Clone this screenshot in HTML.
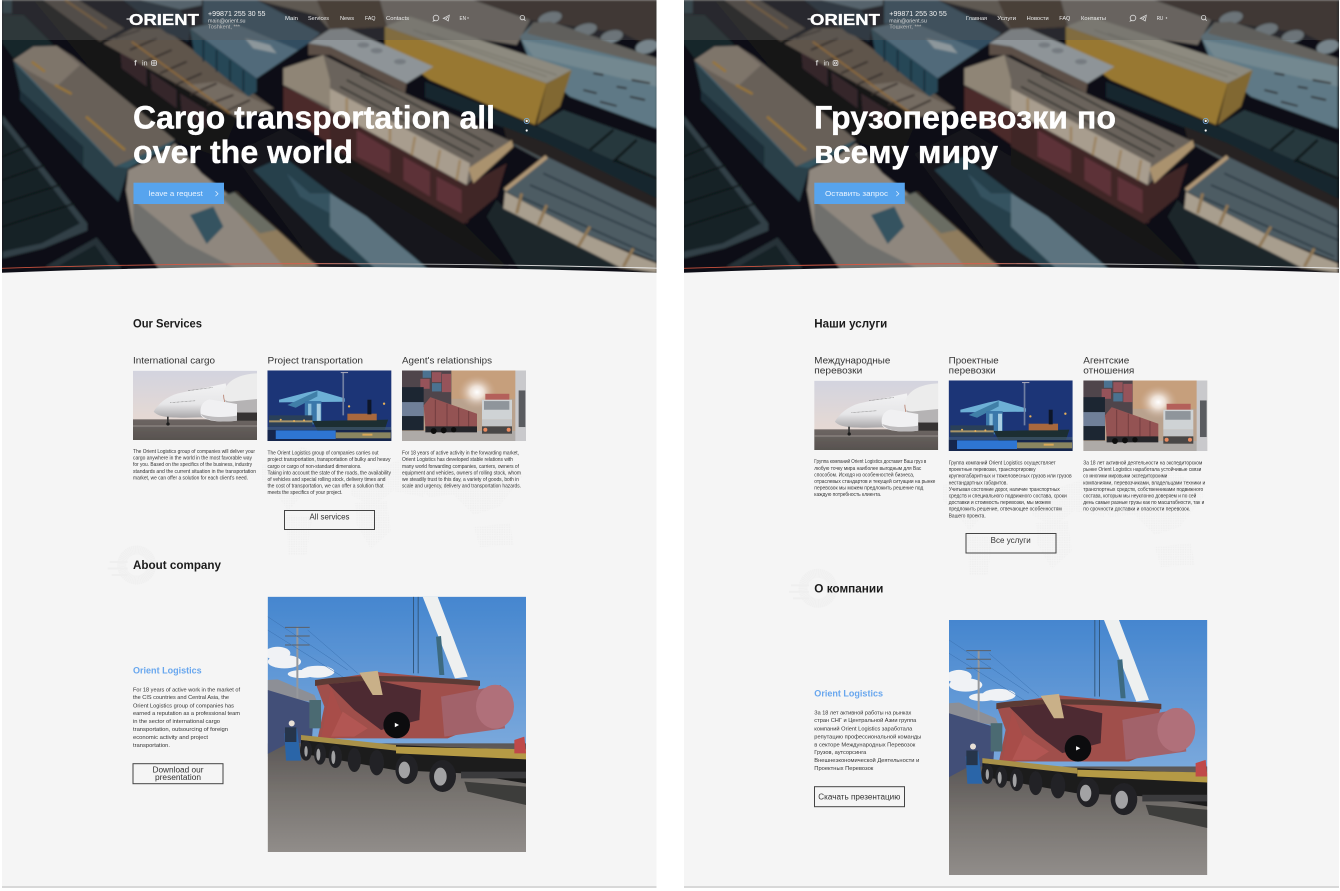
<!DOCTYPE html>
<html lang="en">
<head>
<meta charset="utf-8">
<title>Orient Logistics</title>
<style>
html,body{margin:0;padding:0;background:#fff;width:1340px;height:891px;overflow:hidden}
svg.page{display:block;filter:blur(.28px)}
text{font-family:"Liberation Sans","Noto Sans CJK SC",sans-serif}
.h1{font-size:32px;font-weight:700;fill:#fff;stroke:#fff;stroke-width:.35}
.h2{font-size:11.5px;font-weight:700;fill:#1c1c1c}
.h3{font-size:9.4px;fill:#333}
.p{font-size:5.5px;fill:#333}
.q{font-size:5.7px;fill:#333}
.b{font-size:7.8px;fill:#333}
.l{font-size:9.6px;font-weight:700;fill:#67a6ee}
.n{font-size:5.6px;fill:#eee}
.ph{font-size:7.6px;fill:#f2f2f2}
.m{font-size:5.6px;fill:#ddd}
.t{font-size:5px;fill:#bbb}
.logo{font-size:16px;font-weight:700;fill:#fff;stroke:#fff;stroke-width:.3}
.bt{font-size:7.2px;fill:#eaf4ff}
.btn{fill:none;stroke:#444;stroke-width:1}
.ic{fill:none;stroke:#ddd;stroke-width:.8}
.s{font-size:7px;fill:#e8e8e8}
</style>
</head>
<body>
<svg class="page" width="1340" height="891" viewBox="0 0 1340 891" xmlns="http://www.w3.org/2000/svg">
<defs>
<linearGradient id="lineG" x1="0" x2="1" y1="0" y2="0"><stop offset="0" stop-color="#c8503c"/><stop offset=".46" stop-color="#d8604c"/><stop offset=".6" stop-color="#aaa"/><stop offset="1" stop-color="#eee"/></linearGradient>
<linearGradient id="sky1" x1="0" x2="0" y1="0" y2="1"><stop offset="0" stop-color="#d3d4df"/><stop offset="1" stop-color="#e6d9d3"/></linearGradient>
<linearGradient id="gr1" x1="0" x2="0" y1="0" y2="1"><stop offset="0" stop-color="#6d6663"/><stop offset="1" stop-color="#57524f"/></linearGradient>
<linearGradient id="pl" x1="0" x2="0" y1="0" y2="1"><stop offset="0" stop-color="#f2f2f3"/><stop offset=".6" stop-color="#e6e6e8"/><stop offset="1" stop-color="#a8a6a8"/></linearGradient>
<linearGradient id="sky2" x1="0" x2="0" y1="0" y2="1"><stop offset="0" stop-color="#4586cf"/><stop offset="1" stop-color="#7eabdd"/></linearGradient>
<linearGradient id="gr2" x1="0" x2="0" y1="0" y2="1"><stop offset="0" stop-color="#5c5857"/><stop offset=".45" stop-color="#77736f"/><stop offset="1" stop-color="#918d8a"/></linearGradient>
<radialGradient id="glow"><stop offset="0" stop-color="#fff"/><stop offset=".35" stop-color="#f2e8e0" stop-opacity=".9"/><stop offset="1" stop-color="#c9a88e" stop-opacity="0"/></radialGradient>
<filter id="bl" x="-5%" y="-5%" width="110%" height="110%"><feGaussianBlur stdDeviation="3"/></filter>
<filter id="bl2" x="-5%" y="-5%" width="110%" height="110%"><feGaussianBlur stdDeviation="1"/></filter>
<pattern id="dots" width="2.4" height="2.4" patternUnits="userSpaceOnUse"><rect width="1.5" height="1.5" fill="#f0f0f0"/></pattern>
<clipPath id="cpL"><path d="M2,0H656.5V272.7Q300,261 2,272.7Z"/></clipPath>
<clipPath id="cpR"><path d="M684,0H1339V272.7Q981,261 684,272.7Z"/></clipPath>

<symbol id="hero" viewBox="0 0 1980 825" preserveAspectRatio="none">
<g filter="url(#bl)">
<rect width="1980" height="825" fill="#0c1013"/>
<polygon points="8,45 70,45 160,135 40,175 8,130" fill="#1c2a31"/>
<polygon points="8,0 35,0 35,40 8,40" fill="#2d4650"/>
<polygon points="8,345 262,670 262,692 130,745 8,775" fill="#3a4a50"/>
<polygon points="8,370 240,670 125,730 8,755" fill="#1a262c"/>
<g stroke="#0d1519" stroke-width="5"><line x1="8" y1="470" x2="105" y2="430"/><line x1="8" y1="540" x2="150" y2="490"/><line x1="8" y1="610" x2="195" y2="550"/><line x1="8" y1="680" x2="225" y2="610"/></g>
<polygon points="135,800 290,712 365,805" fill="#2c3a40"/>
<polygon points="175,798 285,735 330,800" fill="#1c282d"/>
<polygon points="100,0 130,0 710,355 660,472 520,422 300,240" fill="#17171b"/>
<g fill="#3f2b32"><polygon points="360,150 440,205 440,260 365,205"/><polygon points="450,215 530,270 530,325 455,270"/><polygon points="540,280 620,330 620,385 545,335"/></g>
<polygon points="130,0 235,0 372,85 300,125" fill="#5e5349"/>
<polygon points="310,130 400,85 490,85 822,325 710,352" fill="#6f6358"/>
<polygon points="560,255 650,245 822,325 710,352" fill="#8a7f72"/>
<g stroke="#3a322d" stroke-width="5"><line x1="345" y1="115" x2="420" y2="90"/><line x1="390" y1="150" x2="470" y2="115"/><line x1="435" y1="185" x2="515" y2="150"/><line x1="480" y1="220" x2="560" y2="185"/><line x1="525" y1="255" x2="605" y2="220"/><line x1="570" y1="285" x2="650" y2="250"/><line x1="620" y1="315" x2="700" y2="285"/><line x1="665" y1="340" x2="750" y2="300"/></g>
<line x1="395" y1="125" x2="690" y2="340" stroke="#a77c40" stroke-width="5"/>
<line x1="195" y1="0" x2="320" y2="85" stroke="#9a7340" stroke-width="6"/>
<polygon points="370,0 420,0 540,30 570,85 565,125 500,100" fill="#1d3340"/>
<polygon points="420,0 605,0 605,15 540,28" fill="#627e8c"/>
<polygon points="610,0 770,0 960,100 925,130 895,150 680,60 610,72" fill="#3a5a70"/>
<polygon points="770,0 990,0 990,90 950,45" fill="#75695c"/>
<polygon points="950,0 1160,0 1160,80 990,90" fill="#4c3b2d"/>
<polygon points="570,85 680,60 895,150 770,235" fill="#5f7e8e"/>
<polygon points="735,115 810,135 830,160 760,145" fill="#a6b2b6"/>
<polygon points="570,85 770,235 770,275 745,290 582,155" fill="#2d5265"/>
<g stroke="#183240" stroke-width="5"><line x1="610" y1="118" x2="610" y2="185"/><line x1="650" y1="150" x2="650" y2="215"/><line x1="690" y1="180" x2="690" y2="245"/><line x1="730" y1="210" x2="730" y2="275"/></g>
<polygon points="1140,0 1420,0 1590,60 1550,135 1160,75" fill="#857d74"/>
<polygon points="1420,0 1970,0 1970,150 1870,100 1590,60" fill="#3a2e28"/>
<g fill="#8c9ba3"><ellipse cx="1650" cy="55" rx="36" ry="18" transform="rotate(-15 1650 55)"/><ellipse cx="1755" cy="90" rx="36" ry="18" transform="rotate(-15 1755 90)"/><ellipse cx="1835" cy="110" rx="34" ry="18" transform="rotate(-15 1835 110)"/><ellipse cx="1940" cy="140" rx="34" ry="20" transform="rotate(-15 1940 140)"/></g>
<polygon points="1560,110 1600,70 1650,65 1970,175 1970,385 1710,290 1590,185" fill="#6e8e9d"/>
<polygon points="1600,68 1650,65 1970,175 1970,200 1580,100" fill="#77756d"/>
<polygon points="1565,120 1970,200 1970,260 1600,170" fill="#87a0a8"/>
<g stroke="#332c2a" stroke-width="5"><line x1="1780" y1="220" x2="1810" y2="225"/><line x1="1895" y1="240" x2="1950" y2="250"/><line x1="1750" y1="270" x2="1790" y2="280"/><line x1="1850" y1="260" x2="1880" y2="265"/><line x1="1890" y1="290" x2="1935" y2="300"/><line x1="1800" y1="305" x2="1850" y2="318"/></g>
<polygon points="1275,245 1610,380 1970,540 1970,595 1630,430 1275,292" fill="#1a2b33"/>
<polygon points="1690,295 1970,385 1970,432 1690,330" fill="#0e1215"/>
<polygon points="1610,378 1690,330 1970,432 1970,540" fill="#2d4046"/>
<g stroke="#0d1417" stroke-width="7"><line x1="1840" y1="390" x2="1770" y2="450"/><line x1="1910" y1="420" x2="1840" y2="485"/><line x1="1845" y1="480" x2="1970" y2="535"/></g>
<polygon points="1530,430 1620,445 1970,610 1970,628 1640,490" fill="#555f62"/>
<polygon points="1510,380 1520,420 1640,480 1980,630 1980,600 1640,430" fill="#2a2723"/>
<polygon points="1155,80 1230,50 1715,210 1640,250" fill="#a6a294"/>
<polygon points="1155,80 1640,250 1605,375 1290,240 1155,140" fill="#b38d39"/>
<polygon points="1640,250 1715,210 1680,320 1610,375" fill="#987a3a"/>
<g stroke="#8b887c" stroke-width="3"><line x1="1280" y1="100" x2="1670" y2="225"/><line x1="1240" y1="90" x2="1640" y2="230"/></g>
<polygon points="925,130 990,88 1040,85 1300,200 1220,250 990,140" fill="#a7aeb2"/>
<polygon points="925,130 990,140 1220,250 1215,280 990,165 925,165" fill="#6a5d50"/>
<g fill="#8a9095"><ellipse cx="1090" cy="135" rx="18" ry="8"/><ellipse cx="1130" cy="152" rx="18" ry="8"/><ellipse cx="1200" cy="185" rx="18" ry="8"/></g>
<polygon points="700,462 850,385 990,470 1510,800 1300,815 950,800" fill="#1a1c1d"/>
<polygon points="760,510 850,470 1230,760 1290,812 1100,812 1000,745" fill="#2e4a56"/>
<polygon points="990,580 1100,650 1280,805 1130,810 990,680" fill="#6a8794"/>
<polygon points="860,520 930,580 990,580 990,640 900,590" fill="#3f6070"/>
<polygon points="40,180 345,500 385,505 355,605 250,500 60,270" fill="#2f4954"/>
<polygon points="40,180 100,140 170,138 220,170 525,420 345,500" fill="#7a7066"/>
<polygon points="40,180 100,140 170,138 240,195 170,260 90,215" fill="#94897d"/>
<polygon points="60,200 340,490 345,500 40,185" fill="#4d7080"/>
<polygon points="345,500 525,420 505,440 385,505" fill="#3f6470"/>
<polygon points="60,270 250,440 250,500 60,300" fill="#223640"/>
<g stroke="#b58b3c" stroke-width="7" fill="none"><line x1="95" y1="185" x2="135" y2="215"/><line x1="165" y1="255" x2="215" y2="282"/><line x1="258" y1="350" x2="375" y2="450"/></g>
<polygon points="385,510 470,470 525,430 605,520 955,800 700,812 480,812 400,690 378,570" fill="#a89f93"/>
<polygon points="400,690 480,812 720,812 560,730 400,600" fill="#84847f"/>
<polygon points="670,590 710,575 945,795 850,798" fill="#a8916c"/>
<polygon points="570,645 640,620 670,680 620,732" fill="#3e6170"/>
<polygon points="660,590 705,575 830,690 780,700" fill="#54707a" opacity=".5"/>
<line x1="705" y1="575" x2="960" y2="800" stroke="#2b2522" stroke-width="5"/>
<polygon points="850,260 1000,320 1000,440 1400,670 1520,490 1490,590 1390,672 1000,440 850,335" fill="#57302f"/>
<polygon points="990,330 1400,555 1520,490 1490,590 1390,670 990,440" fill="#4b2a2c"/>
<g fill="#6d3a3f"><polygon points="1070,390 1170,450 1170,520 1070,470"/><polygon points="1210,470 1290,515 1290,590 1210,540"/><polygon points="1310,530 1385,570 1385,640 1310,600"/></g>
<polygon points="990,440 1390,670 1515,795 1490,800 990,495" fill="#1b1a1b"/>
<polygon points="850,205 970,165 1060,210 1535,425 1400,555 990,330 850,255" fill="#7c756a"/>
<polygon points="850,205 970,165 990,240 990,320 850,255" fill="#a89c8a"/>
<polygon points="990,265 1410,490 1400,555 990,330" fill="#c6b9a6"/>
<g stroke="#3e3c38" stroke-width="5"><line x1="1040" y1="240" x2="1440" y2="450"/><line x1="1080" y1="225" x2="1480" y2="440"/><line x1="1020" y1="260" x2="1420" y2="470"/></g>
<g stroke="#b89a6e" stroke-width="7"><line x1="1040" y1="295" x2="1040" y2="350"/><line x1="1170" y1="380" x2="1170" y2="425"/><line x1="1245" y1="410" x2="1235" y2="465"/><line x1="1320" y1="450" x2="1310" y2="505"/><line x1="1380" y1="480" x2="1370" y2="540"/></g>
<polygon points="1405,505 1535,420 1540,440 1420,550" fill="#c9ac80"/>
<polygon points="1460,650 1490,600 1515,625 1860,800 1560,812" fill="#1d2b30"/>
<polygon points="1510,570 1640,470 1970,630 1970,785 1750,700" fill="#5a6c74"/>
<polygon points="1515,575 1750,700 1890,760 1970,790 1970,818 1860,802 1510,625" fill="#c6baa6"/>
<g stroke="#33444c" stroke-width="5"><line x1="1590" y1="555" x2="1970" y2="720"/><line x1="1630" y1="520" x2="1970" y2="680"/><line x1="1560" y1="590" x2="1960" y2="770"/></g>
<line x1="1515" y1="570" x2="1640" y2="470" stroke="#cdb088" stroke-width="12"/>
<g stroke="#a88c62" stroke-width="9"><line x1="1640" y1="615" x2="1615" y2="675"/><line x1="1770" y1="680" x2="1735" y2="740"/><line x1="1900" y1="745" x2="1870" y2="800"/><line x1="1565" y1="580" x2="1550" y2="640"/></g>
<rect width="1980" height="825" fill="#0a0e12" opacity=".16"/>
</g>
</symbol>

<symbol id="plane" viewBox="0 0 372 208" preserveAspectRatio="none">
<g filter="url(#bl2)">
<rect width="372" height="150" fill="url(#sky1)"/>
<rect y="146" width="372" height="62" fill="url(#gr1)"/>
<rect y="164" width="372" height="4" fill="#8b8581"/>
<path d="M62,123C75,100 100,78 135,68L278,38L300,142L200,140C130,142 80,144 62,123Z" fill="url(#pl)"/>
<rect x="310" y="125" width="62" height="25" fill="#343232"/>
<path d="M372,8C320,10 272,30 272,75C272,105 290,120 320,125L372,125Z" fill="#ececec"/>
<path d="M372,85L300,92Q285,94 276,88C282,108 295,122 320,125L372,125Z" fill="#b5b3b4"/>
<path d="M272,72C272,100 285,118 310,124" fill="none" stroke="#a9654f" stroke-width="2"/>
<path d="M230,86C208,90 198,112 204,134C215,152 270,156 312,150L312,100Z" fill="#f0f0f2"/>
<path d="M204,130C215,152 270,156 312,150L312,135C270,142 230,140 204,130Z" fill="#bdbbbd"/>
<path d="M165,60L240,50" stroke="#777" stroke-width="2" stroke-dasharray="2 2"/>
<path d="M112,96L188,90" stroke="#777" stroke-width="2" stroke-dasharray="2 2"/>
<rect x="102" y="138" width="5" height="20" fill="#333"/>
<circle cx="105" cy="160" r="5" fill="#1c1c1c"/>
</g>
</symbol>

<symbol id="port" viewBox="0 0 372 212" preserveAspectRatio="none">
<g filter="url(#bl2)">
<rect width="372" height="212" fill="#1e3677"/>
<rect y="178" width="372" height="34" fill="#14264e"/>
<rect x="25" y="180" width="180" height="26" fill="#2f74d2"/>
<rect x="205" y="186" width="165" height="18" fill="#8a8560"/>
<rect x="285" y="190" width="30" height="6" fill="#d8a858"/>
<path d="M35,88L120,66L150,60L232,84L232,94L35,96Z" fill="#6db0d6"/>
<path d="M60,104L150,62L150,78L85,112Z" fill="#3f7fa8"/>
<rect x="112" y="92" width="50" height="70" fill="#3a78aa"/>
<rect x="122" y="100" width="10" height="55" fill="#8cc0dc"/><rect x="148" y="100" width="12" height="60" fill="#a8cfe4"/>
<rect x="225" y="5" width="5" height="130" fill="#6f7fa2"/>
<rect x="220" y="5" width="22" height="3" fill="#aab"/>
<rect x="5" y="135" width="130" height="34" fill="#2c4058"/>
<rect x="5" y="150" width="130" height="6" fill="#a79468"/>
<g fill="#e6b05a"><circle cx="245" cy="108" r="3.5"/><circle cx="350" cy="100" r="3.5"/><circle cx="40" cy="148" r="3"/><circle cx="80" cy="152" r="3"/><circle cx="110" cy="150" r="3"/></g>
<path d="M135,152L362,148L352,178L150,180Z" fill="#1f2e30"/>
<rect x="240" y="130" width="88" height="20" fill="#a9683e"/>
<rect x="300" y="88" width="12" height="44" fill="#10182c"/>
<rect x="0" y="170" width="372" height="9" fill="#44607a" opacity=".6"/>
</g>
</symbol>

<symbol id="truck" viewBox="0 0 372 212" preserveAspectRatio="none">
<g filter="url(#bl2)">
<rect width="372" height="212" fill="#b9a28e"/>
<rect x="140" width="210" height="85" fill="#c69f7c"/>
<ellipse cx="225" cy="65" rx="58" ry="52" fill="url(#glow)"/>
<rect x="0" y="0" width="148" height="110" fill="#4f454c"/>
<g fill="#96525a"><rect x="90" y="5" width="28" height="30"/><rect x="120" y="10" width="27" height="55"/><rect x="55" y="25" width="28" height="30"/></g>
<g fill="#4b7290"><rect x="62" y="0" width="25" height="22"/><rect x="90" y="38" width="28" height="25"/></g>
<rect x="0" y="50" width="65" height="130" fill="#1d2731"/>
<rect x="0" y="95" width="65" height="42" fill="#6f8099"/>
<rect y="182" width="372" height="30" fill="#aeaaa7"/>
<polygon points="65,105 85,80 225,130 225,168 70,172" fill="#945352"/>
<g stroke="#733d3f" stroke-width="3"><line x1="100" y1="88" x2="100" y2="170"/><line x1="135" y1="100" x2="135" y2="170"/><line x1="170" y1="112" x2="170" y2="168"/><line x1="200" y1="122" x2="200" y2="168"/></g>
<rect x="70" y="168" width="155" height="18" fill="#26262a"/>
<g fill="#111"><circle cx="95" cy="182" r="9"/><circle cx="125" cy="180" r="9"/><circle cx="155" cy="178" r="8"/></g>
<rect x="250" y="70" width="72" height="18" fill="#b4605a"/>
<rect x="240" y="88" width="90" height="60" fill="#cfd3d5"/>
<rect x="246" y="92" width="76" height="26" fill="#8f959b"/>
<rect x="240" y="148" width="90" height="20" fill="#c3c5c7"/>
<rect x="240" y="168" width="90" height="22" fill="#4a4646"/>
<circle cx="250" cy="178" r="6" fill="#ec8a5e"/><circle cx="320" cy="178" r="6" fill="#ec8a5e"/>
<rect x="340" width="32" height="212" fill="#c9c9cc"/>
<rect x="350" y="60" width="20" height="110" fill="#5a5b60"/>
</g>
</symbol>

<symbol id="photo" viewBox="0 0 775 766" preserveAspectRatio="none">
<g filter="url(#bl2)">
<rect width="775" height="480" fill="url(#sky2)"/>
<rect y="440" width="775" height="326" fill="url(#gr2)"/>
<g fill="#f0f2f5"><ellipse cx="30" cy="170" rx="38" ry="20"/><ellipse cx="50" cy="195" rx="50" ry="20"/><ellipse cx="150" cy="225" rx="50" ry="18"/><ellipse cx="100" cy="232" rx="40" ry="12"/></g>
<polygon points="0,250 30,248 140,295 150,320 0,290" fill="#8d8f96"/>
<polygon points="0,280 140,322 132,440 60,440 0,472" fill="#434f78"/>
<rect x="86" y="90" width="6" height="215" fill="#96989c"/>
<g stroke="#5d6066" stroke-width="3"><line x1="52" y1="92" x2="126" y2="92"/><line x1="52" y1="118" x2="126" y2="118"/><line x1="52" y1="145" x2="126" y2="145"/></g>
<g stroke="#3a71b2" stroke-width="1.5"><line x1="0" y1="60" x2="240" y2="220"/><line x1="0" y1="100" x2="240" y2="250"/><line x1="120" y1="100" x2="270" y2="230"/></g>
<rect x="436" y="0" width="3" height="230" fill="#33597f"/><rect x="450" y="0" width="3" height="230" fill="#33597f"/>
<polygon points="465,0 510,0 600,240 562,245" fill="#eef0f0"/>
<polygon points="505,120 520,118 530,235 515,235" fill="#3c6a80"/>
<polygon points="142,255 327,226 637,255 600,400 540,425 150,425 170,330" fill="#a04f4b"/>
<path d="M142,250Q300,225 637,252L637,268Q300,240 142,268Z" fill="#5b3a36"/>
<polygon points="182,262 320,250 460,280 455,370 340,400 260,340" fill="#4d2c30"/>
<polygon points="190,272 250,420 160,425" fill="#a84e4a"/>
<polygon points="225,345 300,395 260,420 190,420" fill="#b25752"/>
<polygon points="275,228 330,222 345,295 315,295" fill="#c9b088"/>
<polygon points="520,300 700,265 712,395 530,420" fill="#a2626a"/>
<ellipse cx="682" cy="330" rx="57" ry="66" fill="#b0707a"/>
<polygon points="100,425 380,445 775,460 775,560 590,530 380,520 100,470" fill="#1d1c1e"/>
<polygon points="100,415 385,445 385,462 100,430" fill="#a9914a"/>
<polygon points="385,450 775,458 775,488 385,470" fill="#b59a44"/>
<rect x="580" y="525" width="195" height="20" fill="#3a3a3c"/>
<polygon points="590,555 775,570 775,625 600,585" fill="#3e3c3b"/>
<polygon points="740,430 770,420 775,470 740,470" fill="#c04848"/>
<g fill="#232325">
<ellipse cx="115" cy="462" rx="18" ry="30"/><ellipse cx="157" cy="472" rx="18" ry="32"/><ellipse cx="203" cy="480" rx="20" ry="34"/><ellipse cx="260" cy="490" rx="20" ry="36"/><ellipse cx="327" cy="498" rx="22" ry="38"/><ellipse cx="417" cy="518" rx="34" ry="44"/><ellipse cx="525" cy="538" rx="40" ry="48"/>
</g>
<g fill="#a2a2a4"><ellipse cx="410" cy="520" rx="17" ry="25"/><ellipse cx="518" cy="540" rx="19" ry="27"/><ellipse cx="197" cy="482" rx="6" ry="20"/><ellipse cx="152" cy="474" rx="6" ry="18"/><ellipse cx="115" cy="464" rx="5" ry="16"/></g>
<polygon points="50,410 88,395 100,492 55,492" fill="#2c65a8"/>
<rect x="52" y="392" width="34" height="44" fill="#26354c"/>
<circle cx="72" cy="380" r="9" fill="#e8e0d6"/>
<rect x="125" y="310" width="35" height="85" fill="#4b6a72"/>
</g>
</symbol>

<symbol id="deco" viewBox="0 0 80 50" preserveAspectRatio="none">
<circle cx="42" cy="25" r="15" fill="none" stroke="#f0f0f0" stroke-width="9" stroke-dasharray="1.2 .4"/>
<g fill="#efefef"><rect x="15" y="21" width="18" height="2"/><rect x="13" y="27.5" width="20" height="2"/><rect x="17" y="34" width="16" height="2"/></g>
</symbol>

<symbol id="map" viewBox="0 0 260 110" preserveAspectRatio="none">
<g fill="url(#dots)">
<path d="M0,20L40,2L62,10L55,36L38,52L26,66L12,46L0,36Z"/>
<path d="M24,70L50,72L44,110L26,110Z"/>
<path d="M92,30L140,14L170,30L160,52L130,46L110,62L88,50Z"/>
<path d="M92,58L124,56L128,86L108,104L94,80Z"/>
<path d="M150,25L230,5L260,30L235,62L210,70L190,50L165,52Z"/>
<path d="M210,82L246,78L250,100L216,102Z"/>
</g>
</symbol>
</defs>

<rect width="1340" height="891" fill="#fff"/>

<rect x="2" y="0" width="654.5" height="888" fill="#d8d8d8"/>
<rect x="2" y="0" width="654.5" height="886" fill="#f5f5f5"/>
<rect x="684" y="0" width="655" height="888" fill="#d8d8d8"/>
<rect x="684" y="0" width="655" height="886" fill="#f5f5f5"/>

<!-- ===== LEFT ===== -->
<g clip-path="url(#cpL)">
<use href="#hero" x="0" y="0" width="660" height="275"/>
<rect x="2" y="0" width="655" height="40" fill="#5a5a5a" fill-opacity=".36"/>
</g>
<path d="M2,268.3Q300,259 656.5,268.2" fill="none" stroke="url(#lineG)" stroke-width=".9"/>

<path d="M126.5,19H130.5" stroke="#fff" stroke-width="1"/>
<text class="logo" x="129" y="25" textLength="70" lengthAdjust="spacingAndGlyphs">ORIENT</text>
<text class="ph" x="208" y="16" textLength="57.5" lengthAdjust="spacingAndGlyphs">+99871 255 30 55</text>
<text class="m" x="208" y="22.6" textLength="37.5" lengthAdjust="spacingAndGlyphs">main@orient.su</text>
<text class="t" x="208" y="28.6" textLength="32" lengthAdjust="spacingAndGlyphs">Toshkent, ***</text>
<text class="n" x="285" y="20" textLength="13" lengthAdjust="spacingAndGlyphs">Main</text>
<text class="n" x="308" y="20" textLength="21" lengthAdjust="spacingAndGlyphs">Services</text>
<text class="n" x="340" y="20" textLength="14" lengthAdjust="spacingAndGlyphs">News</text>
<text class="n" x="365" y="20" textLength="10.5" lengthAdjust="spacingAndGlyphs">FAQ</text>
<text class="n" x="386" y="20" textLength="23" lengthAdjust="spacingAndGlyphs">Contacts</text>
<circle class="ic" cx="436" cy="18" r="2.8"/><path class="ic" d="M434.1,20L433.3,21L434.8,20.6"/>
<path class="ic" d="M443.3,18.3L449.3,15.2L448.2,21L445.7,19.3ZM445.7,19.3L447.7,17"/>
<text class="n" x="459.5" y="20" textLength="6.5" lengthAdjust="spacingAndGlyphs">EN</text>
<circle cx="468" cy="18" r=".7" fill="#ddd"/>
<circle class="ic" cx="522.3" cy="17.6" r="2.2"/><path class="ic" d="M523.9,19.2L525.4,20.7"/>
<text class="s" x="134" y="65.5" textLength="2.8" lengthAdjust="spacingAndGlyphs">f</text>
<text class="s" x="142" y="65.5" textLength="5.5" lengthAdjust="spacingAndGlyphs">in</text>
<rect class="ic" x="151.6" y="60.6" width="4.8" height="4.8" rx="1.1"/><circle class="ic" cx="154" cy="63" r="1.1"/>

<text class="h1" x="133" y="128.5" textLength="362" lengthAdjust="spacingAndGlyphs">Cargo transportation all</text>
<text class="h1" x="133" y="163" textLength="220" lengthAdjust="spacingAndGlyphs">over the world</text>
<circle cx="526.7" cy="121" r="2.6" fill="none" stroke="#7ab2e8" stroke-width=".8"/><circle cx="526.7" cy="121" r="1.1" fill="#fff"/>
<circle cx="526.7" cy="130.5" r="1.1" fill="#fff"/>
<rect x="133.5" y="182.7" width="90.5" height="21.3" fill="#57a4ee"/>
<text class="bt" x="148.8" y="196" textLength="54" lengthAdjust="spacingAndGlyphs">leave a request</text>
<path d="M215.5,191.3L218,193.7L215.5,196.1" fill="none" stroke="#eaf4ff" stroke-width=".7"/>

<use href="#map" x="262" y="445" width="262" height="110"/>

<text class="h2" x="133" y="327.5" textLength="69" lengthAdjust="spacingAndGlyphs">Our Services</text>
<text class="h3" x="133" y="363.4" textLength="82" lengthAdjust="spacingAndGlyphs">International cargo</text>
<text class="h3" x="267.5" y="363.4" textLength="95.5" lengthAdjust="spacingAndGlyphs">Project transportation</text>
<text class="h3" x="402" y="363.4" textLength="90" lengthAdjust="spacingAndGlyphs">Agent's relationships</text>
<use href="#plane" x="133" y="370.7" width="124" height="69.3"/>
<use href="#port" x="267.4" y="370.4" width="124" height="70.6"/>
<use href="#truck" x="402" y="370.5" width="124" height="70.5"/>

<text class="p" x="133" y="452.9" textLength="122" lengthAdjust="spacingAndGlyphs">The Orient Logistics group of companies will deliver your</text>
<text class="p" x="133" y="459.6" textLength="119" lengthAdjust="spacingAndGlyphs">cargo anywhere in the world in the most favorable way</text>
<text class="p" x="133" y="466.2" textLength="119" lengthAdjust="spacingAndGlyphs">for you. Based on the specifics of the business, industry</text>
<text class="p" x="133" y="472.9" textLength="123" lengthAdjust="spacingAndGlyphs">standards and the current situation in the transportation</text>
<text class="p" x="133" y="479.6" textLength="115" lengthAdjust="spacingAndGlyphs">market, we can offer a solution for each client's need.</text>

<text class="p" x="267.5" y="454.6" textLength="111" lengthAdjust="spacingAndGlyphs">The Orient Logistics group of companies carries out</text>
<text class="p" x="267.5" y="461.2" textLength="123" lengthAdjust="spacingAndGlyphs">project transportation, transportation of bulky and heavy</text>
<text class="p" x="267.5" y="467.9" textLength="94" lengthAdjust="spacingAndGlyphs">cargo or cargo of non-standard dimensions.</text>
<text class="p" x="267.5" y="474.6" textLength="123.5" lengthAdjust="spacingAndGlyphs">Taking into account the state of the roads, the availability</text>
<text class="p" x="267.5" y="481.2" textLength="118" lengthAdjust="spacingAndGlyphs">of vehicles and special rolling stock, delivery times and</text>
<text class="p" x="267.5" y="487.6" textLength="116" lengthAdjust="spacingAndGlyphs">the cost of transportation, we can offer a solution that</text>
<text class="p" x="267.5" y="494.2" textLength="75" lengthAdjust="spacingAndGlyphs">meets the specifics of your project.</text>

<text class="p" x="402" y="454.6" textLength="117" lengthAdjust="spacingAndGlyphs">For 18 years of active activity in the forwarding market,</text>
<text class="p" x="402" y="461.2" textLength="111" lengthAdjust="spacingAndGlyphs">Orient Logistics has developed stable relations with</text>
<text class="p" x="402" y="467.9" textLength="117" lengthAdjust="spacingAndGlyphs">many world forwarding companies, carriers, owners of</text>
<text class="p" x="402" y="474.6" textLength="119" lengthAdjust="spacingAndGlyphs">equipment and vehicles, owners of rolling stock, whom</text>
<text class="p" x="402" y="481.2" textLength="117" lengthAdjust="spacingAndGlyphs">we steadily trust to this day, a variety of goods, both in</text>
<text class="p" x="402" y="487.6" textLength="119" lengthAdjust="spacingAndGlyphs">scale and urgency, delivery and transportation hazards.</text>

<rect class="btn" x="284.5" y="510.5" width="90" height="19"/>
<text class="b" x="309.5" y="519.7" textLength="40" lengthAdjust="spacingAndGlyphs">All services</text>

<use href="#deco" x="94.7" y="540" width="80" height="50"/>
<text class="h2" x="133" y="569" textLength="88" lengthAdjust="spacingAndGlyphs">About company</text>
<text class="l" x="133" y="673.4" textLength="68.7" lengthAdjust="spacingAndGlyphs">Orient Logistics</text>
<text class="q" x="133" y="691.5" textLength="107" lengthAdjust="spacingAndGlyphs">For 18 years of active work in the market of</text>
<text class="q" x="133" y="699.2" textLength="96" lengthAdjust="spacingAndGlyphs">the CIS countries and Central Asia, the</text>
<text class="q" x="133" y="707.5" textLength="101" lengthAdjust="spacingAndGlyphs">Orient Logistics group of companies has</text>
<text class="q" x="133" y="715.2" textLength="107" lengthAdjust="spacingAndGlyphs">earned a reputation as a professional team</text>
<text class="q" x="133" y="723.2" textLength="87" lengthAdjust="spacingAndGlyphs">in the sector of international cargo</text>
<text class="q" x="133" y="731.2" textLength="95" lengthAdjust="spacingAndGlyphs">transportation, outsourcing of foreign</text>
<text class="q" x="133" y="739.2" textLength="75" lengthAdjust="spacingAndGlyphs">economic activity and project</text>
<text class="q" x="133" y="747.2" textLength="37" lengthAdjust="spacingAndGlyphs">transportation.</text>
<rect class="btn" x="133" y="763.7" width="90" height="20"/>
<text class="b" x="152.5" y="772.7" textLength="51" lengthAdjust="spacingAndGlyphs">Download our</text>
<text class="b" x="155" y="780" textLength="46" lengthAdjust="spacingAndGlyphs">presentation</text>
<use href="#photo" x="267.7" y="596.7" width="258.3" height="255.3"/>
<circle cx="396.7" cy="725" r="13.3" fill="#0c0c0e"/>
<path d="M394.8,722.8L399,725L394.8,727.2Z" fill="#fff"/>

<!-- ===== RIGHT ===== -->
<g clip-path="url(#cpR)">
<use href="#hero" x="681" y="0" width="660" height="275"/>
<rect x="684" y="0" width="655" height="40" fill="#5a5a5a" fill-opacity=".36"/>
</g>
<path d="M684,268.3Q981,259 1339,268.2" fill="none" stroke="url(#lineG)" stroke-width=".9"/>

<path d="M807.5,19H811.5" stroke="#fff" stroke-width="1"/>
<text class="logo" x="810" y="25" textLength="70" lengthAdjust="spacingAndGlyphs">ORIENT</text>
<text class="ph" x="889.3" y="16" textLength="57.5" lengthAdjust="spacingAndGlyphs">+99871 255 30 55</text>
<text class="m" x="889.3" y="22.6" textLength="37.5" lengthAdjust="spacingAndGlyphs">main@orient.su</text>
<text class="t" x="889.3" y="28.6" textLength="32" lengthAdjust="spacingAndGlyphs">Тошкент, ***</text>
<text class="n" x="966" y="20" textLength="21" lengthAdjust="spacingAndGlyphs">Главная</text>
<text class="n" x="997.3" y="20" textLength="18.7" lengthAdjust="spacingAndGlyphs">Услуги</text>
<text class="n" x="1026.7" y="20" textLength="22" lengthAdjust="spacingAndGlyphs">Новости</text>
<text class="n" x="1059.3" y="20" textLength="11" lengthAdjust="spacingAndGlyphs">FAQ</text>
<text class="n" x="1081" y="20" textLength="25" lengthAdjust="spacingAndGlyphs">Контакты</text>
<circle class="ic" cx="1133" cy="18" r="2.8"/><path class="ic" d="M1131.1,20L1130.3,21L1131.8,20.6"/>
<path class="ic" d="M1140.3,18.3L1146.3,15.2L1145.2,21L1142.7,19.3ZM1142.7,19.3L1144.7,17"/>
<text class="n" x="1156.7" y="20" textLength="6.5" lengthAdjust="spacingAndGlyphs">RU</text>
<circle cx="1166.5" cy="18" r=".7" fill="#ddd"/>
<circle class="ic" cx="1203.6" cy="17.6" r="2.2"/><path class="ic" d="M1205.2,19.2L1206.7,20.7"/>
<text class="s" x="815.5" y="65.5" textLength="2.8" lengthAdjust="spacingAndGlyphs">f</text>
<text class="s" x="823.5" y="65.5" textLength="5.5" lengthAdjust="spacingAndGlyphs">in</text>
<rect class="ic" x="833.1" y="60.6" width="4.8" height="4.8" rx="1.1"/><circle class="ic" cx="835.5" cy="63" r="1.1"/>

<text class="h1" x="814" y="128.5" textLength="302" lengthAdjust="spacingAndGlyphs">Грузоперевозки по</text>
<text class="h1" x="814" y="163" textLength="184" lengthAdjust="spacingAndGlyphs">всему миру</text>
<circle cx="1205.7" cy="121" r="2.6" fill="none" stroke="#7ab2e8" stroke-width=".8"/><circle cx="1205.7" cy="121" r="1.1" fill="#fff"/>
<circle cx="1205.7" cy="130.5" r="1.1" fill="#fff"/>
<rect x="814.3" y="182.7" width="90.5" height="21.3" fill="#57a4ee"/>
<text class="bt" x="825" y="196" textLength="63" lengthAdjust="spacingAndGlyphs">Оставить запрос</text>
<path d="M896.3,191.3L898.8,193.7L896.3,196.1" fill="none" stroke="#eaf4ff" stroke-width=".7"/>

<use href="#map" x="943" y="465" width="262" height="110"/>

<text class="h2" x="814.3" y="327.5" textLength="73" lengthAdjust="spacingAndGlyphs">Наши услуги</text>
<text class="h3" x="814.3" y="363.4" textLength="76" lengthAdjust="spacingAndGlyphs">Международные</text>
<text class="h3" x="814.3" y="373.7" textLength="48" lengthAdjust="spacingAndGlyphs">перевозки</text>
<text class="h3" x="948.7" y="363.4" textLength="50" lengthAdjust="spacingAndGlyphs">Проектные</text>
<text class="h3" x="948.7" y="373.7" textLength="47" lengthAdjust="spacingAndGlyphs">перевозки</text>
<text class="h3" x="1083.3" y="363.4" textLength="46" lengthAdjust="spacingAndGlyphs">Агентские</text>
<text class="h3" x="1083.3" y="373.7" textLength="51" lengthAdjust="spacingAndGlyphs">отношения</text>
<use href="#plane" x="814.2" y="380.7" width="124" height="69.3"/>
<use href="#port" x="948.7" y="380.4" width="124" height="70.6"/>
<use href="#truck" x="1083.3" y="380.5" width="124" height="70.5"/>

<text class="p" x="814.3" y="463" textLength="112" lengthAdjust="spacingAndGlyphs">Группа компаний Orient Logistics доставит Ваш груз в</text>
<text class="p" x="814.3" y="470" textLength="107" lengthAdjust="spacingAndGlyphs">любую точку мира наиболее выгодным для Вас</text>
<text class="p" x="814.3" y="476.4" textLength="100" lengthAdjust="spacingAndGlyphs">способом. Исходя из особенностей бизнеса,</text>
<text class="p" x="814.3" y="483" textLength="121" lengthAdjust="spacingAndGlyphs">отраслевых стандартов и текущей ситуации на рынке</text>
<text class="p" x="814.3" y="489.7" textLength="109" lengthAdjust="spacingAndGlyphs">перевозок мы можем предложить решение под</text>
<text class="p" x="814.3" y="496" textLength="67" lengthAdjust="spacingAndGlyphs">каждую потребность клиента.</text>

<text class="p" x="948.7" y="464.4" textLength="107" lengthAdjust="spacingAndGlyphs">Группа компаний Orient Logistics осуществляет</text>
<text class="p" x="948.7" y="471" textLength="87" lengthAdjust="spacingAndGlyphs">проектные перевозки, транспортировку</text>
<text class="p" x="948.7" y="477.7" textLength="123" lengthAdjust="spacingAndGlyphs">крупногабаритных и тяжеловесных грузов или грузов</text>
<text class="p" x="948.7" y="484.4" textLength="59" lengthAdjust="spacingAndGlyphs">нестандартных габаритов.</text>
<text class="p" x="948.7" y="491" textLength="111" lengthAdjust="spacingAndGlyphs">Учитывая состояние дорог, наличие транспортных</text>
<text class="p" x="948.7" y="497.4" textLength="118" lengthAdjust="spacingAndGlyphs">средств и специального подвижного состава, сроки</text>
<text class="p" x="948.7" y="504" textLength="102" lengthAdjust="spacingAndGlyphs">доставки и стоимость перевозки, мы можем</text>
<text class="p" x="948.7" y="510.7" textLength="113" lengthAdjust="spacingAndGlyphs">предложить решение, отвечающее особенностям</text>
<text class="p" x="948.7" y="517.4" textLength="37" lengthAdjust="spacingAndGlyphs">Вашего проекта.</text>

<text class="p" x="1083.3" y="464.4" textLength="119" lengthAdjust="spacingAndGlyphs">За 18 лет активной деятельности на экспедиторском</text>
<text class="p" x="1083.3" y="471" textLength="118" lengthAdjust="spacingAndGlyphs">рынке Orient Logistics наработала устойчивые связи</text>
<text class="p" x="1083.3" y="477.7" textLength="84" lengthAdjust="spacingAndGlyphs">со многими мировыми экспедиторскими</text>
<text class="p" x="1083.3" y="484.4" textLength="122" lengthAdjust="spacingAndGlyphs">компаниями, перевозчиками, владельцами техники и</text>
<text class="p" x="1083.3" y="491" textLength="120" lengthAdjust="spacingAndGlyphs">транспортных средств, собственниками подвижного</text>
<text class="p" x="1083.3" y="497.4" textLength="113" lengthAdjust="spacingAndGlyphs">состава, которым мы неуклонно доверяем и по сей</text>
<text class="p" x="1083.3" y="504" textLength="121" lengthAdjust="spacingAndGlyphs">день самые разные грузы как по масштабности, так и</text>
<text class="p" x="1083.3" y="510.7" textLength="107" lengthAdjust="spacingAndGlyphs">по срочности доставки и опасности перевозок.</text>

<rect class="btn" x="966" y="533.5" width="90" height="19.5"/>
<text class="b" x="990.7" y="543" textLength="40" lengthAdjust="spacingAndGlyphs">Все услуги</text>

<use href="#deco" x="776" y="563.3" width="80" height="50"/>
<text class="h2" x="814.3" y="592.3" textLength="69" lengthAdjust="spacingAndGlyphs">О компании</text>
<text class="l" x="814.3" y="696.4" textLength="68.7" lengthAdjust="spacingAndGlyphs">Orient Logistics</text>
<text class="q" x="814.3" y="714.5" textLength="97" lengthAdjust="spacingAndGlyphs">За 18 лет активной работы на рынках</text>
<text class="q" x="814.3" y="722.2" textLength="102" lengthAdjust="spacingAndGlyphs">стран СНГ и Центральной Азии группа</text>
<text class="q" x="814.3" y="730.5" textLength="98" lengthAdjust="spacingAndGlyphs">компаний Orient Logistics заработала</text>
<text class="q" x="814.3" y="738.5" textLength="107" lengthAdjust="spacingAndGlyphs">репутацию профессиональной команды</text>
<text class="q" x="814.3" y="746.5" textLength="101" lengthAdjust="spacingAndGlyphs">в секторе Международных Перевозок</text>
<text class="q" x="814.3" y="754.1" textLength="52" lengthAdjust="spacingAndGlyphs">Грузов, аутсорсинга</text>
<text class="q" x="814.3" y="762.1" textLength="105" lengthAdjust="spacingAndGlyphs">Внешнеэкономической Деятельности и</text>
<text class="q" x="814.3" y="770.1" textLength="59" lengthAdjust="spacingAndGlyphs">Проектных Перевозок</text>
<rect class="btn" x="814.5" y="786.7" width="90" height="20"/>
<text class="b" x="818.3" y="799.3" textLength="82" lengthAdjust="spacingAndGlyphs">Скачать презентацию</text>
<use href="#photo" x="949" y="620" width="258.3" height="255"/>
<circle cx="1078" cy="748.3" r="13.3" fill="#0c0c0e"/>
<path d="M1076.1,746.1L1080.3,748.3L1076.1,750.5Z" fill="#fff"/>
</svg>
</body>
</html>
